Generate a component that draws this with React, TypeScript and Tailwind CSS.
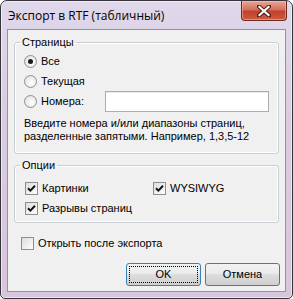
const ui = "font-['Liberation_Sans','Arial',sans-serif] text-[11px] leading-[13px] text-black"

function Radio({ checked }: { checked?: boolean }) {
  return (
    <span className="flex h-[13px] w-[13px] shrink-0 items-center justify-center rounded-full border border-[#8e8f8f] bg-[radial-gradient(circle_at_60%_60%,#ffffff,#dcdcdc)]">
      {checked && <span className="h-[5px] w-[5px] rounded-full bg-[#1a1a1a]" />}
    </span>
  )
}

function Check({ checked }: { checked?: boolean }) {
  return (
    <span className="flex h-[13px] w-[13px] shrink-0 items-center justify-center border border-[#8f8f8f] bg-[linear-gradient(135deg,#dcdcdc,#ffffff)]">
      {checked && (
        <svg width="9" height="9" viewBox="0 0 9 9">
          <path d="M1 4.2 L3.4 6.6 L8 1.8" fill="none" stroke="#111" strokeWidth="2" />
        </svg>
      )}
    </span>
  )
}

function WinButton({ label, isDefault }: { label: string; isDefault?: boolean }) {
  return (
    <button
      className={`flex h-[23px] w-[75px] items-center justify-center rounded-[3px] border bg-[linear-gradient(to_bottom,#f2f2f2_0%,#ebebeb_45%,#dddddd_50%,#cfcfcf_100%)] p-[2px] ${
        isDefault ? 'border-[#3c7fb1]' : 'border-[#707070]'
      }`}
    >
      <span
        className={`flex h-full w-full items-center justify-center ${
          isDefault ? 'border border-dotted border-black' : ''
        }`}
      >
        {label}
      </span>
    </button>
  )
}

export default function App() {
  return (
    <div className={`${ui} h-[299px] w-[293px] bg-white`}>
      <div className="flex h-[299px] w-[293px] flex-col rounded-t-[7px] rounded-b-[5px] border border-[#37353b] bg-[linear-gradient(to_bottom,#dfd8ea,#d9cce0_40%,#d7c5dc)] shadow-[inset_0_0_0_1px_rgba(255,255,255,0.55)]">
        {/* Title bar */}
        <div className="flex h-[28px] shrink-0 items-start justify-between pl-[7px] pr-[5px]">
          <span className="mt-[8px] font-['Open_Sans','Noto_Sans',sans-serif] text-[12px] leading-[14px] text-black">
            Экспорт в RTF (табличный)
          </span>
          <div className="flex h-[20px] w-[46px] items-center justify-center rounded-b-[4px] border border-t-0 border-[#6e2a22] bg-[linear-gradient(to_bottom,#e8a898,#d4705c_45%,#c0412c_55%,#cf5b3a)] shadow-[inset_0_0_0_1px_rgba(255,200,180,0.5)]">
            <svg width="14" height="12" viewBox="0 0 14 12">
              <path d="M2 1.5 L12 10.5 M12 1.5 L2 10.5" stroke="#4a1a14" strokeWidth="4" strokeLinecap="square" />
              <path d="M2.5 2 L11.5 10 M11.5 2 L2.5 10" stroke="#ffffff" strokeWidth="2.2" strokeLinecap="square" />
            </svg>
          </div>
        </div>

        {/* Client area */}
        <div className="mx-[6px] mb-[6px] flex h-[263px] flex-col border border-[#9890a0] bg-[#f0f0f0]">
          <fieldset className="mx-[6px] mt-[6px] rounded-[3px] border border-[#c8ced3] pb-[10px] pl-[9px] pr-[9px] shadow-[inset_0_0_0_1px_#ffffff]">
            <legend className="ml-[-4px] px-[2px] leading-[13px]">Страницы</legend>
            <div className="flex flex-col pt-[2px]">
              <label className="flex h-[20px] items-center gap-[4px]">
                <Radio checked />
                <span>Все</span>
              </label>
              <label className="flex h-[20px] items-center gap-[4px]">
                <Radio />
                <span>Текущая</span>
              </label>
              <div className="flex h-[20px] items-center">
                <label className="flex w-[81px] items-center gap-[4px]">
                  <Radio />
                  <span>Номера:</span>
                </label>
                <div className="h-[21px] w-[164px] border border-[#abadb3] bg-white shadow-[inset_0_1px_0_#e3e9ef]" />
              </div>
            </div>
            <p className="mt-[6px] whitespace-nowrap">
              Введите номера и/или диапазоны страниц,
              <br />
              разделенные запятыми. Например, 1,3,5-12
            </p>
          </fieldset>

          <fieldset className="mx-[6px] mt-[5px] rounded-[3px] border border-[#c8ced3] pb-[4px] pl-[10px] pr-[9px] shadow-[inset_0_0_0_1px_#ffffff]">
            <legend className="ml-[-5px] px-[2px] leading-[13px]">Опции</legend>
            <div className="grid grid-cols-[128px_1fr] pt-[6px]">
              <label className="flex h-[20px] items-center gap-[4px]">
                <Check checked />
                <span>Картинки</span>
              </label>
              <label className="flex h-[20px] items-center gap-[4px]">
                <Check checked />
                <span>WYSIWYG</span>
              </label>
              <label className="col-span-2 flex h-[20px] items-center gap-[4px]">
                <Check checked />
                <span>Разрывы страниц</span>
              </label>
            </div>
          </fieldset>

          <label className="ml-[13px] mt-[10px] flex h-[20px] items-center gap-[4px]">
            <Check />
            <span>Открыть после экспорта</span>
          </label>

          <div className="mt-[10px] flex justify-end gap-[4px] pr-[5px]">
            <WinButton label="OK" isDefault />
            <WinButton label="Отмена" />
          </div>
        </div>
      </div>
    </div>
  )
}
